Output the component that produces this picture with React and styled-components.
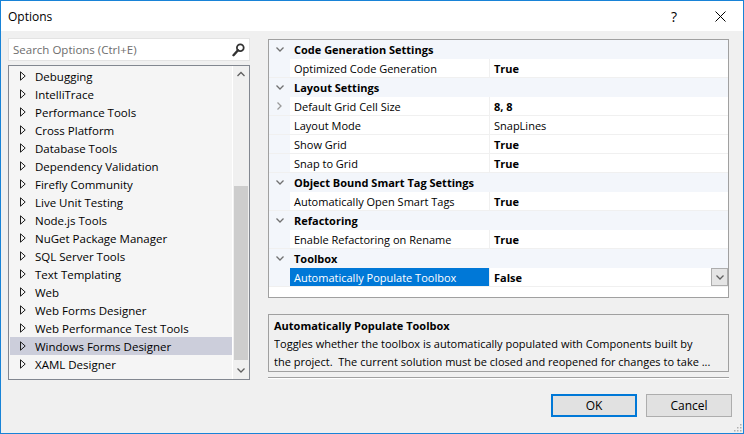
import React from "react";
import styled, { createGlobalStyle } from "styled-components";

const GlobalStyle = createGlobalStyle`
  html, body {
    margin: 0;
    padding: 0;
    background: #f0f0f0;
  }
  * {
    box-sizing: border-box;
  }
`;

const font = `"Segoe UI", "Open Sans", "Liberation Sans", sans-serif`;

const Window = styled.div`
  position: relative;
  width: 744px;
  height: 434px;
  border: 1px solid #1883d7;
  background: #f0f0f0;
  display: flex;
  flex-direction: column;
  font-family: ${font};
  font-size: 11px;
  color: #000;
  overflow: hidden;
`;

const TitleBar = styled.div`
  height: 30px;
  background: #fff;
  display: flex;
  align-items: center;
  flex-shrink: 0;
`;

const Title = styled.div`
  flex: 1;
  padding-left: 7px;
  font-size: 12px;
  color: #000;
`;

const CaptionButton = styled.div`
  width: 46px;
  height: 30px;
  display: flex;
  align-items: center;
  justify-content: center;
  font-size: 14px;
  color: #000;
`;

const Main = styled.div`
  display: grid;
  grid-template-columns: 242px 461px;
  column-gap: 18px;
  padding: 7px 0 0 7px;
  height: 349px;
`;

const LeftColumn = styled.div`
  display: flex;
  flex-direction: column;
  gap: 4px;
`;

const SearchBox = styled.div`
  height: 23px;
  background: #fff;
  border: 1px solid #e3e3e3;
  display: flex;
  align-items: center;
  padding: 0 4px 0 4px;
`;

const SearchText = styled.span`
  flex: 1;
  color: #6d6d6d;
  font-size: 11.5px;
`;

const Tree = styled.div`
  height: 315px;
  border: 1px solid #828790;
  background: #f5f5f5;
  display: flex;
`;

const TreeList = styled.div`
  flex: 1;
  padding: 1px 0 0 1px;
`;

const TreeRow = styled.div`
  height: 18px;
  display: flex;
  align-items: center;
  padding-left: 10px;
  background: ${(p) => (p.$selected ? "#cccedb" : "transparent")};
  white-space: nowrap;
`;

const TreeLabel = styled.span`
  margin-left: 9px;
  font-size: 11.5px;
`;

const ScrollBar = styled.div`
  width: 17px;
  background: #f0f0f0;
  border-left: 1px solid #fff;
  display: flex;
  flex-direction: column;
`;

const ScrollArrow = styled.div`
  height: 17px;
  display: flex;
  align-items: center;
  justify-content: center;
`;

const ScrollTrack = styled.div`
  flex: 1;
  padding: 0 1px;
`;

const ScrollThumb = styled.div`
  margin-top: 103px;
  height: 174px;
  background: #cdcdcd;
`;

const RightColumn = styled.div`
  display: flex;
  flex-direction: column;
`;

const PropGrid = styled.div`
  margin-top: 1px;
  height: 259px;
  border: 1px solid #a0a0a0;
  background: #fff;
`;

const PropRow = styled.div`
  height: 19px;
  display: flex;
  border-bottom: 1px solid ${(p) => (p.$category ? "#f3f6fb" : "#f0f0f0")};
  background: ${(p) => (p.$category ? "#f3f6fb" : "#fff")};
`;

const Gutter = styled.div`
  width: 21px;
  flex-shrink: 0;
  background: #f3f6fb;
  display: flex;
  align-items: center;
  justify-content: center;
`;

const CategoryLabel = styled.div`
  flex: 1;
  display: flex;
  align-items: center;
  padding-left: 4px;
  font-weight: 700;
`;

const NameCell = styled.div`
  width: 199px;
  flex-shrink: 0;
  display: flex;
  align-items: center;
  padding-left: 4px;
  background: ${(p) => (p.$selected ? "#0078d7" : "#fff")};
  color: ${(p) => (p.$selected ? "#fff" : "#000")};
  white-space: nowrap;
`;

const ValueCell = styled.div`
  flex: 1;
  display: flex;
  align-items: center;
  padding-left: 4px;
  border-left: 1px solid #f0f0f0;
  font-weight: ${(p) => (p.$bold ? 700 : 400)};
`;

const ValueText = styled.span`
  flex: 1;
`;

const DropButton = styled.div`
  width: 17px;
  height: 18px;
  background: #e5e5e5;
  border: 1px solid #adadad;
  display: flex;
  align-items: center;
  justify-content: center;
  align-self: flex-start;
`;

const Description = styled.div`
  margin-top: 16px;
  height: 58px;
  border: 1px solid #a0a0a0;
  background: #f0f0f0;
  padding: 2px 5px 0 5px;
  line-height: 18px;
`;

const DescTitle = styled.div`
  font-weight: 700;
`;

const DescLine = styled.div`
  white-space: nowrap;
  overflow: hidden;
`;

const Separator = styled.div`
  margin-top: 5px;
  height: 2px;
  border-top: 1px solid #a0a0a0;
  border-bottom: 1px solid #fff;
`;

const Footer = styled.div`
  display: flex;
  justify-content: flex-end;
  gap: 9px;
  padding: 14px 11px 0 0;
`;

const Button = styled.div`
  width: 86px;
  height: 23px;
  background: #e1e1e1;
  border: ${(p) => (p.$default ? "2px solid #0078d7" : "1px solid #adadad")};
  display: flex;
  align-items: center;
  justify-content: center;
  font-size: 12px;
`;

const Grip = styled.svg`
  position: absolute;
  right: 1px;
  bottom: 1px;
`;

const TreeArrow = () => (
  <svg width="6" height="10" viewBox="0 0 6 10">
    <path d="M0.5 0.8 L5.2 5 L0.5 9.2 Z" fill="none" stroke="#1e1e1e" strokeWidth="1" />
  </svg>
);

const Chevron = ({ dir = "down", color = "#6d6d6d" }) => {
  const d = {
    down: "M0.5 1.5 L4 5 L7.5 1.5",
    up: "M0.5 5 L4 1.5 L7.5 5",
    right: "M1.5 0.5 L5 4 L1.5 7.5",
  }[dir];
  return (
    <svg width="8" height={dir === "right" ? 8 : 7} viewBox={dir === "right" ? "0 0 8 8" : "0 0 8 7"}>
      <path d={d} fill="none" stroke={color} strokeWidth="1.3" />
    </svg>
  );
};

const treeItems = [
  "Debugging",
  "IntelliTrace",
  "Performance Tools",
  "Cross Platform",
  "Database Tools",
  "Dependency Validation",
  "Firefly Community",
  "Live Unit Testing",
  "Node.js Tools",
  "NuGet Package Manager",
  "SQL Server Tools",
  "Text Templating",
  "Web",
  "Web Forms Designer",
  "Web Performance Test Tools",
  "Windows Forms Designer",
  "XAML Designer",
];

const props = [
  { category: "Code Generation Settings" },
  { name: "Optimized Code Generation", value: "True", bold: true },
  { category: "Layout Settings" },
  { name: "Default Grid Cell Size", value: "8, 8", bold: true, expandable: true },
  { name: "Layout Mode", value: "SnapLines" },
  { name: "Show Grid", value: "True", bold: true },
  { name: "Snap to Grid", value: "True", bold: true },
  { category: "Object Bound Smart Tag Settings" },
  { name: "Automatically Open Smart Tags", value: "True", bold: true },
  { category: "Refactoring" },
  { name: "Enable Refactoring on Rename", value: "True", bold: true },
  { category: "Toolbox" },
  { name: "Automatically Populate Toolbox", value: "False", bold: true, selected: true },
];

export default function App() {
  return (
    <>
      <GlobalStyle />
      <Window>
        <TitleBar>
          <Title>Options</Title>
          <CaptionButton>?</CaptionButton>
          <CaptionButton>
            <svg width="11" height="11" viewBox="0 0 11 11">
              <path d="M0.5 0.5 L10.5 10.5 M10.5 0.5 L0.5 10.5" stroke="#000" strokeWidth="1" />
            </svg>
          </CaptionButton>
        </TitleBar>

        <Main>
          <LeftColumn>
            <SearchBox>
              <SearchText>Search Options (Ctrl+E)</SearchText>
              <svg width="13" height="14" viewBox="0 0 13 14">
                <circle cx="8.3" cy="4.7" r="3.4" fill="none" stroke="#333" strokeWidth="1.8" />
                <path d="M6 7.2 L1.5 12.2" stroke="#333" strokeWidth="2.4" strokeLinecap="round" />
              </svg>
            </SearchBox>
            <Tree>
              <TreeList>
                {treeItems.map((item) => (
                  <TreeRow key={item} $selected={item === "Windows Forms Designer"}>
                    <TreeArrow />
                    <TreeLabel>{item}</TreeLabel>
                  </TreeRow>
                ))}
              </TreeList>
              <ScrollBar>
                <ScrollArrow>
                  <Chevron dir="up" color="#606060" />
                </ScrollArrow>
                <ScrollTrack>
                  <ScrollThumb />
                </ScrollTrack>
                <ScrollArrow>
                  <Chevron dir="down" color="#606060" />
                </ScrollArrow>
              </ScrollBar>
            </Tree>
          </LeftColumn>

          <RightColumn>
            <PropGrid>
              {props.map((p, i) =>
                p.category ? (
                  <PropRow key={i} $category>
                    <Gutter>
                      <Chevron dir="down" color="#717171" />
                    </Gutter>
                    <CategoryLabel>{p.category}</CategoryLabel>
                  </PropRow>
                ) : (
                  <PropRow key={i}>
                    <Gutter>{p.expandable && <Chevron dir="right" color="#9a9a9a" />}</Gutter>
                    <NameCell $selected={p.selected}>{p.name}</NameCell>
                    <ValueCell $bold={p.bold}>
                      <ValueText>{p.value}</ValueText>
                      {p.selected && (
                        <DropButton>
                          <Chevron dir="down" color="#606060" />
                        </DropButton>
                      )}
                    </ValueCell>
                  </PropRow>
                )
              )}
            </PropGrid>
            <Description>
              <DescTitle>Automatically Populate Toolbox</DescTitle>
              <DescLine>Toggles whether the toolbox is automatically populated with Components built by</DescLine>
              <DescLine>the project.&nbsp; The current solution must be closed and reopened for changes to take ...</DescLine>
            </Description>
            <Separator />
          </RightColumn>
        </Main>

        <Footer>
          <Button $default>OK</Button>
          <Button>Cancel</Button>
        </Footer>

        <Grip width="9" height="9" viewBox="0 0 9 9">
          {[
            [7, 1],
            [7, 4],
            [4, 4],
            [7, 7],
            [4, 7],
            [1, 7],
          ].map(([x, y]) => (
            <rect key={`${x}-${y}`} x={x} y={y} width="1.5" height="1.5" fill="#b0b0b0" />
          ))}
        </Grip>
      </Window>
    </>
  );
}
